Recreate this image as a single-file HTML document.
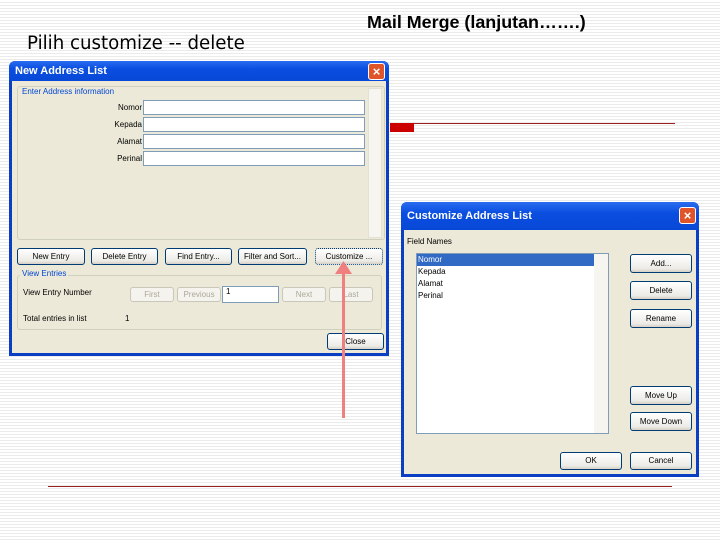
<!DOCTYPE html>
<html><head><meta charset="utf-8"><style>
*{box-sizing:border-box;margin:0;padding:0}
body{width:720px;height:540px;position:relative;overflow:hidden;font-family:"Liberation Sans",sans-serif;
background:repeating-linear-gradient(to bottom,#fff 0,#fff 2px,#ebebeb 2px,#ebebeb 3px)}
.a{position:absolute}
.win{position:absolute;background:#ece9d8;border:3px solid #0a3fc4;border-top:none;border-radius:6px 6px 0 0}
.tb{position:absolute;left:-3px;right:-3px;top:0;background:linear-gradient(#2a6cf0,#0a4ee0 40%,#0848d6);border-radius:6px 6px 0 0;color:#fff;font-weight:bold;font-size:11px;padding-left:6px}
.x{position:absolute;width:17px;height:17px;background:#e0542c;border:1px solid #fff;border-radius:3px;color:#fff;font-size:13px;line-height:15px;text-align:center;font-weight:bold}
.btn{position:absolute;background:linear-gradient(#fff,#ecebe6 80%,#d6d0c5);border:1px solid #003c74;border-radius:3px;font-size:8px;text-align:center;color:#000}
.fld{position:absolute;background:#fff;border:1px solid #7f9db9;height:15px}
.lbl{position:absolute;font-size:8px;color:#000;text-align:right}
.grp{position:absolute;border:1px solid #d0d0bf;border-radius:3px}
.gt{position:absolute;font-size:8px;color:#0046d5;background:#ece9d8;padding:0 2px}
.dis{color:#aca899;border-color:#c9c7ba;background:#f4f3ee}
</style></head><body>
<div class="a" style="left:367px;top:12px;font-size:17.9px;font-weight:bold">Mail Merge (lanjutan…….)</div>
<div class="a" style="left:27px;top:33px;font-size:18.2px;font-family:'DejaVu Sans',sans-serif">Pilih customize -- delete</div>
<div class="a" style="left:390px;top:123px;width:285px;height:1px;background:#a02020"></div>
<div class="a" style="left:390px;top:123px;width:24px;height:9px;background:#cc0000"></div>
<div class="a" style="left:48px;top:486px;width:624px;height:1px;background:#a02020"></div>

<div class="win" style="left:9px;top:61px;width:380px;height:295px">
 <div class="tb" style="height:20px;line-height:20px">New Address List</div>
 <div class="x" style="left:356px;top:2px">×</div>
 <div class="a" style="left:5px;top:25px;width:368px;height:154px;border:1px solid #d0d0bf;border-radius:3px"></div>
 <div class="gt" style="left:8px;top:26px">Enter Address information</div>
 <div class="lbl" style="left:60px;width:70px;top:42px">Nomor</div>
 <div class="lbl" style="left:60px;width:70px;top:59px">Kepada</div>
 <div class="lbl" style="left:60px;width:70px;top:76px">Alamat</div>
 <div class="lbl" style="left:60px;width:70px;top:93px">Perinal</div>
 <div class="fld" style="left:131px;top:39px;width:222px"></div>
 <div class="fld" style="left:131px;top:56px;width:222px"></div>
 <div class="fld" style="left:131px;top:73px;width:222px"></div>
 <div class="fld" style="left:131px;top:90px;width:222px"></div>
 <div class="a" style="left:356px;top:27px;width:14px;height:150px;background:#f6f5ef;border:1px solid #e3e1d6"></div>
 <div class="btn" style="left:5px;top:187px;width:68px;height:17px;line-height:15px">New Entry</div>
 <div class="btn" style="left:79px;top:187px;width:67px;height:17px;line-height:15px">Delete Entry</div>
 <div class="btn" style="left:153px;top:187px;width:67px;height:17px;line-height:15px">Find Entry...</div>
 <div class="btn" style="left:226px;top:187px;width:69px;height:17px;line-height:15px">Filter and Sort...</div>
 <div class="btn" style="left:303px;top:187px;width:68px;height:17px;line-height:15px;border-style:dotted">Customize ...</div>
 <div class="grp" style="left:5px;top:214px;width:365px;height:55px"></div>
 <div class="gt" style="left:8px;top:208px">View Entries</div>
 <div class="lbl" style="left:11px;top:227px;text-align:left">View Entry Number</div>
 <div class="lbl" style="left:11px;top:253px;text-align:left">Total entries in list</div>
 <div class="lbl" style="left:113px;top:253px">1</div>
 <div class="btn dis" style="left:118px;top:226px;width:44px;height:15px;line-height:13px">First</div>
 <div class="btn dis" style="left:165px;top:226px;width:44px;height:15px;line-height:13px">Previous</div>
 <div class="fld" style="left:210px;top:225px;width:57px;height:17px;font-size:8px;padding-left:3px">1</div>
 <div class="btn dis" style="left:270px;top:226px;width:44px;height:15px;line-height:13px">Next</div>
 <div class="btn dis" style="left:317px;top:226px;width:44px;height:15px;line-height:13px">Last</div>
 <div class="btn" style="left:315px;top:272px;width:57px;height:17px;line-height:15px">Close</div>
</div>

<div class="win" style="left:401px;top:202px;width:298px;height:275px">
 <div class="tb" style="height:28px;line-height:28px;font-size:11px">Customize Address List</div>
 <div class="x" style="left:275px;top:5px">×</div>
 <div class="lbl" style="left:3px;top:35px;text-align:left">Field Names</div>
 <div class="a" style="left:12px;top:51px;width:193px;height:181px;background:#fff;border:1px solid #7f9db9;font-size:8px;line-height:12px">
  <div style="background:#316ac5;color:#fff;width:177px;padding-left:1px">Nomor</div>
  <div style="padding-left:1px">Kepada</div><div style="padding-left:1px">Alamat</div><div style="padding-left:1px">Perinal</div>
  <div class="a" style="right:0;top:0;width:14px;height:179px;background:#f6f5ef"></div>
 </div>
 <div class="btn" style="left:226px;top:52px;width:62px;height:19px;line-height:17px">Add...</div>
 <div class="btn" style="left:226px;top:79px;width:62px;height:19px;line-height:17px">Delete</div>
 <div class="btn" style="left:226px;top:107px;width:62px;height:19px;line-height:17px">Rename</div>
 <div class="btn" style="left:226px;top:184px;width:62px;height:19px;line-height:17px">Move Up</div>
 <div class="btn" style="left:226px;top:210px;width:62px;height:19px;line-height:17px">Move Down</div>
 <div class="btn" style="left:156px;top:250px;width:62px;height:18px;line-height:16px">OK</div>
 <div class="btn" style="left:226px;top:250px;width:62px;height:18px;line-height:16px">Cancel</div>
</div>

<div class="a" style="left:342px;top:272px;width:3px;height:146px;background:#f08080"></div>
<svg class="a" style="left:335px;top:261px" width="17" height="13"><polygon points="8.5,0 17,13 0,13" fill="#f08080"/></svg>
</body></html>
